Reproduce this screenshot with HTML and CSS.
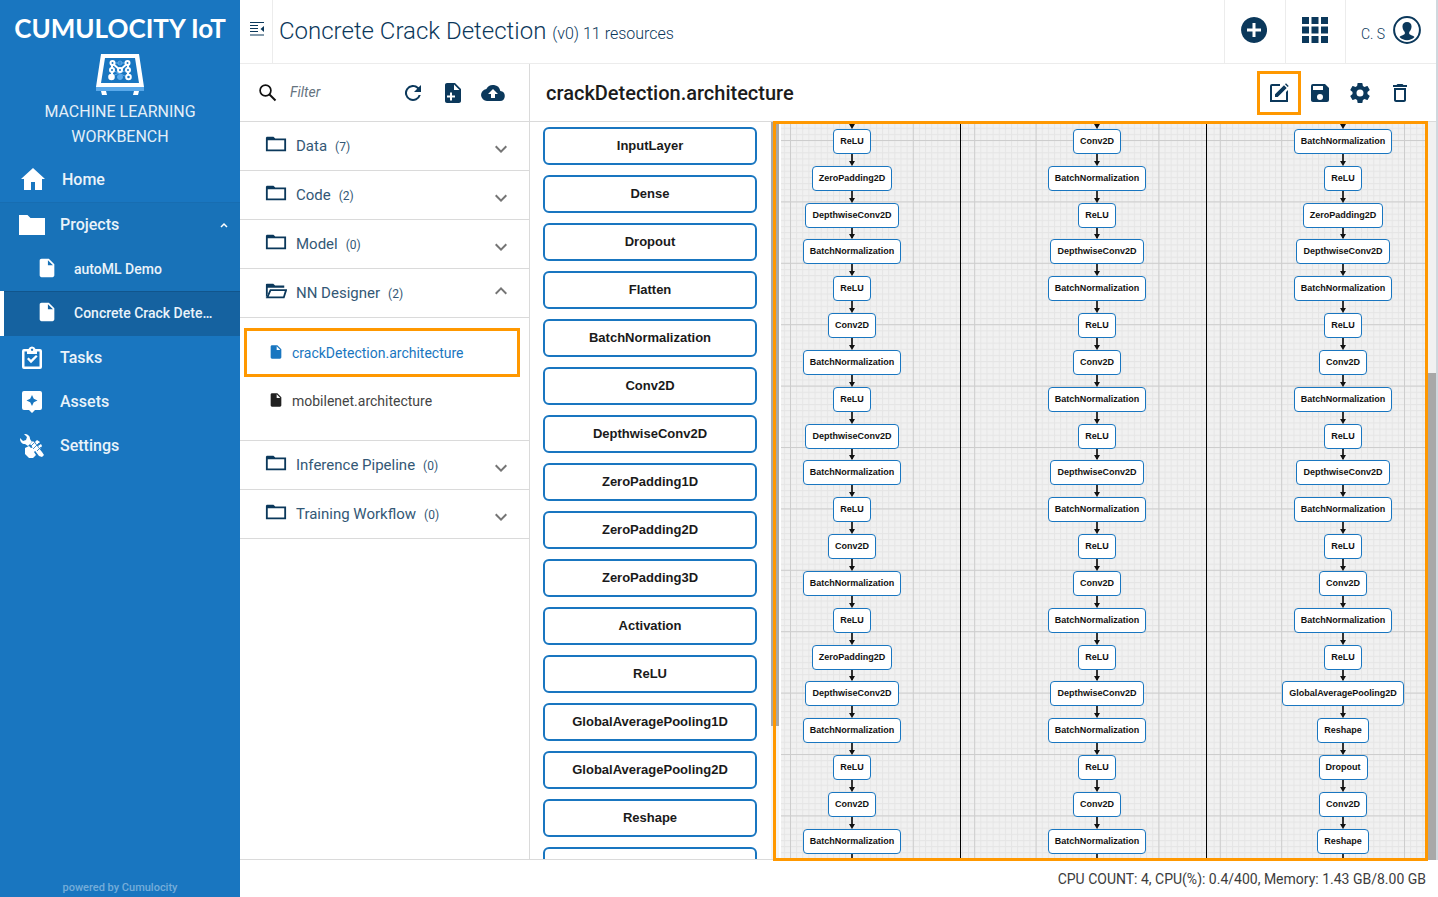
FILE: index.html
```html
<!DOCTYPE html>
<html lang="en">
<head>
<meta charset="utf-8">
<title>Machine Learning Workbench</title>
<link rel="stylesheet" href="styles.css">
</head>
<body>
<svg class="defs" aria-hidden="true">
  <symbol id="folder" viewBox="0 0 24 24"><path d="M9.200 4H2.500C1.700 4 1 4.700 1 5.500V20h22V6H11.200zM3 8h18v10H3z" fill-rule="evenodd"/></symbol>
  <symbol id="folder-open" viewBox="0 0 24 24"><path d="M1 20V5q0-1 1-1h7l2 2h10v2.500H3V15z"/><path d="M2.500 19L6 11h17l-2.500 8z" fill="none" stroke="currentColor" stroke-width="2"/></symbol>
  <symbol id="file" viewBox="0 0 24 24"><path fill-rule="evenodd" d="M6 2C4.900 2 4 2.900 4 4v16c0 1.100.9 2 2 2h12c1.100 0 2-.9 2-2V8l-6-6H6zm7 7V3.500L18.500 9H13z"/></symbol>
  <symbol id="down" viewBox="0 0 24 24"><path d="M7.400 8.600L12 13.200l4.600-4.600L18 10l-6 6-6-6z"/></symbol>
  <symbol id="up" viewBox="0 0 24 24"><path d="M7.400 15.400L12 10.800l4.600 4.600L18 14l-6-6-6 6z"/></symbol>
</svg>
<div class="app">
  <aside class="sidebar">
    <div class="brand">
      <div class="brand-name">CUMULOCITY IoT</div>
      <svg class="brand-icon" viewBox="0 0 48 42">
        <path fill="#fff" fill-rule="evenodd" d="M5 0h38l5 33H0zM9 4L5 29h38L39 4z"/>
        <path fill="#5aa9ea" d="M0 33h48v4H0z"/>
        <path fill="#fff" d="M5 37h5l1 4H6zM38 37h5l-1 4h-5z"/>
        <g stroke="#5aa9ea" fill="none" stroke-width="1"><path d="M16 9h15M16 22l15-6M16 16l15 7"/><circle cx="24" cy="9" r="2"/><circle cx="24" cy="23" r="2.500" fill="#5aa9ea"/></g>
        <g stroke="#fff" stroke-width="2" fill="#1976c0"><path fill="none" d="M16 23V9l8 7 8-7v14"/><circle cx="16.500" cy="9" r="2"/><circle cx="31.500" cy="9" r="2"/><circle cx="16" cy="16" r="2"/><circle cx="24" cy="16" r="2"/><circle cx="32" cy="16" r="2"/><circle cx="15.500" cy="23" r="2.300" fill="#fff"/><circle cx="32.500" cy="23" r="2.300"/></g>
      </svg>
      <div class="brand-sub">MACHINE LEARNING<br>WORKBENCH</div>
    </div>
    <nav class="nav">
      <a class="nav-item home" href="#"><svg viewBox="0 0 24 24"><path d="M12 1L0 12h3v11h7v-8h4v8h7V12h3z"/></svg>Home</a>
      <div class="nav-group">
        <a class="nav-item" href="#"><svg class="wide" viewBox="0 0 26 22"><path d="M0 1h8.500l3 3H26v17H0z"/></svg>Projects<svg class="caret" viewBox="0 0 8 6"><path d="M1 5l3-3 3 3" fill="none" stroke="#fff" stroke-width="1.500"/></svg></a>
        <a class="nav-item sub" href="#"><svg viewBox="0 0 24 24"><use href="#file"/></svg>autoML Demo</a>
        <a class="nav-item sub active" href="#"><svg viewBox="0 0 24 24"><use href="#file"/></svg>Concrete Crack Dete…</a>
      </div>
      <a class="nav-item" href="#"><svg viewBox="0 0 24 24"><path fill-rule="evenodd" d="M4 3h4.500a3.700 3.700 0 0 1 7 0H20q2 0 2 2v16q0 2-2 2H4q-2 0-2-2V5q0-2 2-2zm.5 2.500v15h15v-15H17V8H7V5.500zM12 2.500a1.200 1.200 0 1 0 .1 0z"/><path d="M7 13l1.600-1.600 2.400 2.400L16 9l1.600 1.600-6.600 6.600z"/></svg>Tasks</a>
      <a class="nav-item" href="#"><svg viewBox="0 0 24 24"><path fill-rule="evenodd" d="M4 1h16q2 0 2 2v15q0 2-2 2h-5l-3 3-3-3H4q-2 0-2-2V3q0-2 2-2zm8 4l-1.800 3.800L6.500 10.500l3.700 1.700L12 16l1.800-3.800 3.700-1.700-3.700-1.700z"/></svg>Assets</a>
      <a class="nav-item" href="#"><svg viewBox="0 0 24 24"><path d="M4 0l3 3-1 3-3 1-3-3c0 4 2 6 5 6l3 2 4-4-2-3c0-3-2-5-6-5z"/><path d="M5 14l4-2 2 2 3-1 2 3-2 2 2 3-3 3H9l-4-4z"/><path d="M10 10l3-3 9 11 2 3-2 2-3-1zM15 8l2-2 3 2-3 3zM18 12l3-2 1 2-2 3z"/><path d="M11 12l3-3M13 15l6-6M17 17l4-4" stroke="#1976c0" stroke-width=".8" fill="none"/></svg>Settings</a>
    </nav>
    <div class="powered">powered by Cumulocity</div>
  </aside>

  <div class="main">
    <div class="frame">
      <header class="header">
        <button class="collapse" aria-label="Collapse menu"><svg viewBox="0 0 14 14"><path d="M0 .5h14M0 3.500h8M0 6.500h8M0 9.500h8M0 13h14" stroke="#0b385b" stroke-width="1.200"/><path d="M14 4v6l-3.500-3z"/></svg></button>
        <h1>Concrete Crack Detection <small>(v0) 11 resources</small></h1>
        <button class="head-cell" aria-label="Add"><svg viewBox="0 0 26 26"><path fill-rule="evenodd" d="M13 0a13 13 0 1 0 .1 0zM11.500 6h3v5.500H20v3h-5.500V20h-3v-5.500H6v-3h5.500z"/></svg></button>
        <button class="head-cell apps" aria-label="Applications"><svg viewBox="0 0 26 26"><path d="M0 0h7v7H0zM9.500 0h7v7h-7zM19 0h7v7h-7zM0 9.500h7v7H0zM9.500 9.500h7v7h-7zM19 9.500h7v7h-7zM0 19h7v7H0zM9.500 19h7v7h-7zM19 19h7v7h-7z"/></svg></button>
        <button class="head-cell user"><span>C. S</span><svg viewBox="0 0 28 28"><circle cx="14" cy="14" r="12.900" fill="none" stroke="#0b385b" stroke-width="2"/><path d="M14 6c-3 0-4.800 2-4.500 5 .2 2 1 3.800 2.300 5v2c-1.500 1.200-4 1.500-5.300 3a10.500 10.500 0 0 0 15 0c-1.300-1.500-3.800-1.800-5.300-3v-2c1.300-1.200 2.100-3 2.300-5 .3-3-1.500-5-4.500-5z"/></svg></button>
      </header>
      <div class="content">
        <section class="files">
          <div class="filter">
            <svg class="search" viewBox="0 0 18 18"><circle cx="6.500" cy="6.500" r="5.400" fill="none" stroke="#111" stroke-width="1.700"/><path d="M10.500 10.500l6 6" stroke="#111" stroke-width="2"/></svg>
            <input type="text" placeholder="Filter" aria-label="Filter">
            <button class="icon" aria-label="Refresh"><svg viewBox="0 0 24 24"><path d="M17.650 6.350A8 8 0 1 0 19.730 14h-2.080A6 6 0 1 1 12 6c1.660 0 3.140.69 4.220 1.780L13 11h7V4z"/></svg></button>
            <button class="icon" aria-label="New file"><svg viewBox="0 0 24 24"><path fill-rule="evenodd" d="M6 2C4.900 2 4 2.900 4 4v16c0 1.100.9 2 2 2h12c1.100 0 2-.9 2-2V8l-6-6zm7 7V3.500L18.500 9zM9 11.500h2v3h3v2h-3v3H9v-3H6v-2h3z"/></svg></button>
            <button class="icon" aria-label="Upload"><svg viewBox="0 0 24 24"><path d="M19.350 10.040A7.490 7.490 0 0 0 5.350 8.040 6 6 0 0 0 6 20h13a5 5 0 0 0 .35-9.960zM14 13v4h-4v-4H7l5-5 5 5z"/></svg></button>
          </div>
          <button class="row"><svg><use href="#folder"/></svg>Data <small>(7)</small><svg class="chev"><use href="#down"/></svg></button>
          <button class="row"><svg><use href="#folder"/></svg>Code <small>(2)</small><svg class="chev"><use href="#down"/></svg></button>
          <button class="row"><svg><use href="#folder"/></svg>Model <small>(0)</small><svg class="chev"><use href="#down"/></svg></button>
          <button class="row" aria-expanded="true"><svg><use href="#folder-open"/></svg>NN Designer <small>(2)</small><svg class="chev"><use href="#up"/></svg></button>
          <div class="file-list">
            <a class="file selected" href="#"><svg><use href="#file"/></svg>crackDetection.architecture</a>
            <a class="file" href="#"><svg><use href="#file"/></svg>mobilenet.architecture</a>
          </div>
          <button class="row"><svg><use href="#folder"/></svg>Inference Pipeline <small>(0)</small><svg class="chev"><use href="#down"/></svg></button>
          <button class="row"><svg><use href="#folder"/></svg>Training Workflow <small>(0)</small><svg class="chev"><use href="#down"/></svg></button>
        </section>
        <section class="editor">
          <div class="toolbar">
            <h2>crackDetection.architecture</h2>
            <button class="icon marked" aria-label="Edit"><svg viewBox="0 0 24 24"><path d="M13 3v2H5v14h14v-8l2-2v12H3V5q0-2 2-2zM8 13.300L17 4.300l2.700 2.700-9 9H8zM18 3.300l1-1L21.700 5l-1 1z"/></svg></button>
            <button class="icon" aria-label="Save"><svg viewBox="0 0 24 24"><path fill-rule="evenodd" d="M17 3H5a2 2 0 0 0-2 2v14c0 1.100.9 2 2 2h14a2 2 0 0 0 2-2V7zm-5 16a3 3 0 1 1 0-6 3 3 0 0 1 0 6zM15 9H5V5h10z"/></svg></button>
            <button class="icon" aria-label="Settings"><svg viewBox="0 0 24 24"><path d="M19.430 12.980c.04-.32.07-.64.07-.98s-.03-.66-.07-.98l2.110-1.650c.19-.15.24-.42.12-.64l-2-3.460c-.12-.22-.39-.3-.61-.22l-2.490 1c-.52-.4-1.080-.73-1.690-.98l-.38-2.650A.49.49 0 0 0 14 2h-4c-.25 0-.46.18-.49.42l-.38 2.650c-.61.25-1.170.59-1.690.98l-2.490-1c-.23-.09-.49 0-.61.22l-2 3.460c-.13.22-.07.49.12.64l2.110 1.650c-.04.32-.07.65-.07.98s.03.66.07.98l-2.110 1.650c-.19.15-.24.42-.12.64l2 3.460c.12.22.39.3.61.22l2.490-1c.52.4 1.080.73 1.690.98l.38 2.650c.03.24.24.42.49.42h4c.25 0 .46-.18.49-.42l.38-2.650c.61-.25 1.170-.59 1.690-.98l2.490 1c.23.09.49 0 .61-.22l2-3.460c.12-.22.07-.49-.12-.64zM12 15.500a3.500 3.500 0 1 1 0-7 3.500 3.500 0 0 1 0 7z"/></svg></button>
            <button class="icon" aria-label="Delete"><svg viewBox="0 0 24 24"><path fill-rule="evenodd" d="M6 19c0 1.100.9 2 2 2h8c1.100 0 2-.9 2-2V7H6zM8 9h8v10H8zM15.500 4l-1-1h-5l-1 1H5v2h14V4z"/></svg></button>
          </div>
          <div class="designer">
            <div class="palette">
              <div class="layers">
                <button>InputLayer</button><button>Dense</button><button>Dropout</button><button>Flatten</button><button>BatchNormalization</button><button>Conv2D</button><button>DepthwiseConv2D</button><button>ZeroPadding1D</button><button>ZeroPadding2D</button><button>ZeroPadding3D</button><button>Activation</button><button>ReLU</button><button>GlobalAveragePooling1D</button><button>GlobalAveragePooling2D</button><button>Reshape</button><button></button>
              </div>
              <div class="track"><div class="thumb palette-thumb"></div></div>
            </div>
            <div class="canvas">
              <svg class="grid">
                <defs>
                  <pattern id="minor" x="9" y="18" width="6.140" height="6.140" patternUnits="userSpaceOnUse"><path d="M0 .5h6.140M.5 0v6.140" stroke="#e5e5e5" fill="none"/></pattern>
                  <pattern id="major" x="9" y="18" width="61.400" height="61.400" patternUnits="userSpaceOnUse"><path d="M0 .5h61.400M.5 0v61.400" stroke="#cdcdcd" fill="none"/></pattern>
                </defs>
                <rect width="100%" height="100%" fill="url(#minor)"/><rect width="100%" height="100%" fill="url(#major)"/>
              </svg>
              <div class="link first"></div><div class="link second"></div>
              <div class="chain left"><span>ReLU</span><span>ZeroPadding2D</span><span>DepthwiseConv2D</span><span>BatchNormalization</span><span>ReLU</span><span>Conv2D</span><span>BatchNormalization</span><span>ReLU</span><span>DepthwiseConv2D</span><span>BatchNormalization</span><span>ReLU</span><span>Conv2D</span><span>BatchNormalization</span><span>ReLU</span><span>ZeroPadding2D</span><span>DepthwiseConv2D</span><span>BatchNormalization</span><span>ReLU</span><span>Conv2D</span><span>BatchNormalization</span></div>
              <div class="chain middle"><span>Conv2D</span><span>BatchNormalization</span><span>ReLU</span><span>DepthwiseConv2D</span><span>BatchNormalization</span><span>ReLU</span><span>Conv2D</span><span>BatchNormalization</span><span>ReLU</span><span>DepthwiseConv2D</span><span>BatchNormalization</span><span>ReLU</span><span>Conv2D</span><span>BatchNormalization</span><span>ReLU</span><span>DepthwiseConv2D</span><span>BatchNormalization</span><span>ReLU</span><span>Conv2D</span><span>BatchNormalization</span></div>
              <div class="chain right"><span>BatchNormalization</span><span>ReLU</span><span>ZeroPadding2D</span><span>DepthwiseConv2D</span><span>BatchNormalization</span><span>ReLU</span><span>Conv2D</span><span>BatchNormalization</span><span>ReLU</span><span>DepthwiseConv2D</span><span>BatchNormalization</span><span>ReLU</span><span>Conv2D</span><span>BatchNormalization</span><span>ReLU</span><span>GlobalAveragePooling2D</span><span>Reshape</span><span>Dropout</span><span>Conv2D</span><span>Reshape</span></div>
            </div>
            <div class="track end"><div class="thumb canvas-thumb"></div></div>
            <div class="outline"></div>
          </div>
        </section>
      </div>
    </div>
    <footer class="status">CPU COUNT: 4, CPU(%): 0.4/400, Memory: 1.43 GB/8.00 GB</footer>
  </div>
</div>
</body>
</html>
```
FILE: styles.css
```css
* { box-sizing: border-box; }
body { margin: 0; font-family: Roboto, "Liberation Sans", sans-serif; color: #0b385b; background: #fff; }
button { font: inherit; color: inherit; background: none; border: 0; padding: 0; }
a { color: inherit; text-decoration: none; }
svg { display: block; fill: currentColor; flex: none; }
.defs { position: absolute; width: 0; height: 0; }
.app { display: flex; height: 100vh; overflow: hidden; }

/* Sidebar */
.sidebar { width: 240px; flex: none; display: flex; flex-direction: column; background: #1976c0; color: #fff; }
.brand { display: flex; flex-direction: column; align-items: center; padding-top: 12px; }
.brand-name { font: bold 26px/32px Lato, sans-serif; white-space: nowrap; }
.brand-icon { width: 48px; height: 42px; margin-top: 10px; }
.brand-sub { font-size: 16px; line-height: 25px; text-align: center; color: #e3eff8; margin-top: 3px; }
.nav { padding-top: 8px; }
.nav-item { display: flex; align-items: center; height: 44px; padding: 0 0 1px 20px; font-size: 16px; font-weight: 500; color: #eaf3fa; white-space: nowrap; }
.nav-item svg { width: 24px; height: 24px; margin-right: 16px; fill: #fff; }
.nav-item.home { height: 45px; }
.nav-item.home svg { width: 26px; margin-right: 16px; }
.nav-item svg.wide { width: 26px; height: 22px; margin-right: 15px; margin-left: -1px; }
.nav-item svg.caret { width: 8px; height: 6px; margin: 0 12px 0 auto; }
.nav-group { background: #1872b8; border-top: 1px solid #176db1; }
.nav-item.sub { padding-left: 36px; font-size: 14px; }
.nav-item.sub svg { width: 22px; height: 22px; margin-bottom: 2px; }
.nav-item.active { height: 45px; padding-left: 32px; border-left: 4px solid #fff; background: #1562a0; box-shadow: inset 0 1px #11558c; }
.powered { margin-top: auto; text-align: center; font-size: 11px; line-height: 18px; color: #75add9; font-weight: 500; }

/* Header */
.main { flex: 1; min-width: 0; display: flex; flex-direction: column; }
.frame { flex: 1; min-height: 0; display: flex; flex-direction: column; border-right: 2px solid #d0d8de; }
.header { display: flex; height: 64px; flex: none; border-bottom: 1px solid #ececec; }
.collapse { width: 33px; padding: 0 0 5px 10px; border-right: 1px solid #ececec; }
.collapse svg { width: 14px; height: 14px; }
h1 { flex: 1; margin: 0; padding-left: 6px; font-size: 24px; line-height: 62px; font-weight: 300; white-space: nowrap; }
h1 small { font-size: 16px; }
.head-cell { width: 61px; display: flex; align-items: center; justify-content: center; padding: 0 2px 3px 0; border-left: 1px solid #ececec; }
.head-cell.apps { width: 60px; }
.head-cell svg { width: 26px; height: 26px; }
.head-cell.user { width: 91px; gap: 8px; padding-right: 0; font-size: 14px; font-weight: 300; }
.user span { padding-top: 8px; }
.head-cell.user svg { width: 28px; height: 28px; }
.content { flex: 1; min-height: 0; display: flex; }

/* Resource list */
.files { width: 290px; flex: none; border-right: 1px solid #dadada; border-bottom: 1px solid #dadada; }
.filter { display: flex; align-items: center; height: 58px; padding: 0 16px 0 19px; border-bottom: 1px solid #dadada; }
.search { width: 18px; height: 18px; }
.filter input { flex: 1; min-width: 0; border: 0; outline: 0; padding: 0 0 1px 13px; font: italic 14px Roboto, sans-serif; }
.filter input::placeholder { color: #66747f; }
.icon { width: 40px; height: 44px; display: flex; align-items: center; justify-content: center; }
.icon svg { width: 24px; height: 24px; }
.row { display: flex; align-items: center; width: 100%; height: 49px; padding: 0 16px 1px 25px; border-bottom: 1px solid #dadada; font-size: 15px; color: #335876; }
.row svg { width: 22px; height: 22px; margin: 0 9px 4px 0; color: #0b385b; }
.row small { font-size: 12px; margin: 2px 0 0 8px; }
.row svg.chev { width: 24px; height: 24px; margin: 6px 0 0 auto; color: #757575; }
.row[aria-expanded] svg.chev { margin: 0 0 3px auto; }
.file-list { padding: 10px 9px 15px 4px; border-bottom: 1px solid #dadada; }
.file { display: flex; align-items: center; height: 48px; padding-left: 24px; font-size: 14px; color: #444; }
.file svg { width: 16px; height: 16px; margin: 0 8px 2px 0; color: #212121; }
.file.selected { height: 49px; padding-left: 21px; border: 3px solid #ff9800; color: #1976c0; }
.file.selected svg { color: #1976c0; }

/* Editor */
.editor { flex: 1; min-width: 0; display: flex; flex-direction: column; }
.toolbar { height: 58px; flex: none; display: flex; align-items: center; padding: 0 16px; border-bottom: 1px solid #dadada; }
h2 { flex: 1; margin: 0; font-size: 20px; font-weight: 500; color: #1c1c1c; }
.icon.marked { width: 44px; margin-right: -1px; border: 3px solid #ff9800; }
.designer { position: relative; flex: 1; min-height: 0; display: flex; }
.palette { width: 249px; flex: none; display: flex; overflow: hidden; border-bottom: 1px solid #dadada; }
.layers { flex: 1; display: flex; flex-direction: column; gap: 10px; padding: 5px 14px 0 13px; }
.layers button { height: 38px; flex: none; padding-bottom: 2px; border: 2px solid #1976c0; border-radius: 6px; font: bold 13px "Liberation Sans", sans-serif; color: #1a1a1a; }
.track { width: 8px; flex: none; background: #f5f5f5; }
.thumb { background: #a8a8a8; }
.palette-thumb { height: 82%; }
.track.end { display: flex; align-items: flex-end; background: #f1f1f1; }
.canvas-thumb { width: 100%; height: 66%; }
.canvas { position: relative; flex: 1; min-width: 0; margin-left: 2px; overflow: hidden; background: #f1f1f1; }
.grid { width: 100%; height: 100%; }
.link { position: absolute; top: 0; bottom: 0; width: 1px; background: #000; }
.first { left: 179px; }
.second { left: 425px; }
.chain { position: absolute; top: 7px; bottom: 6px; width: 140px; display: flex; flex-direction: column; align-items: center; justify-content: space-between; }
.left { left: 1px; }
.middle { left: 246px; }
.right { left: 492px; }
.chain span { position: relative; height: 25px; padding: 0 6px; border: 1px solid #1976c0; border-radius: 4px; background: #fff; color: #111; font: bold 9px/22px "Liberation Sans", sans-serif; white-space: nowrap; }
.chain span::before { content: ""; position: absolute; left: calc(50% - 3px); top: -6px; border: 3px solid transparent; border-top: 5px solid #111; border-bottom: 0; }
.chain span::after { content: ""; position: absolute; left: calc(50% - 1px); top: 24px; width: 2px; height: 10px; background: #333; }
.outline { position: absolute; top: -1px; bottom: -1px; left: 243px; right: 8px; border: 3px solid #ff9800; pointer-events: none; }
.status { height: 37px; flex: none; padding-right: 12px; line-height: 38px; font-size: 14px; text-align: right; color: #3c3c3c; }
```
